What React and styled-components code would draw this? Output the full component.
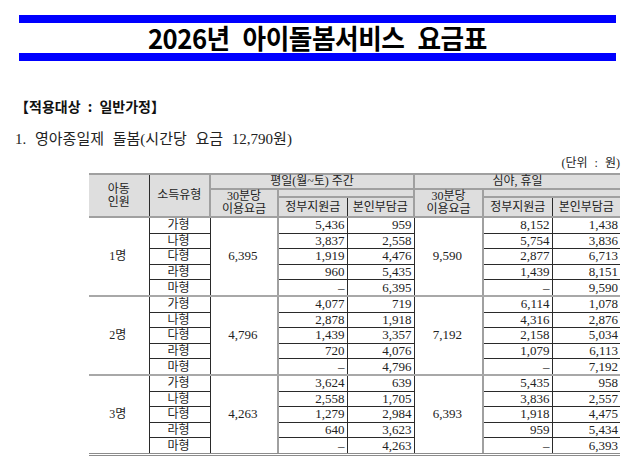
import React from "react"
import styled, { createGlobalStyle } from "styled-components"

const GlobalStyle = createGlobalStyle`
  body {
    margin: 0;
    background: #fff;
    color: #111;
    font-family: "Liberation Serif", "Noto Sans CJK KR", serif;
  }
`

const groups = [
  {
    label: "1명",
    day: "6,395",
    night: "9,590",
    rows: [
      ["가형", "5,436", "959", "8,152", "1,438"],
      ["나형", "3,837", "2,558", "5,754", "3,836"],
      ["다형", "1,919", "4,476", "2,877", "6,713"],
      ["라형", "960", "5,435", "1,439", "8,151"],
      ["마형", "–", "6,395", "–", "9,590"],
    ],
  },
  {
    label: "2명",
    day: "4,796",
    night: "7,192",
    rows: [
      ["가형", "4,077", "719", "6,114", "1,078"],
      ["나형", "2,878", "1,918", "4,316", "2,876"],
      ["다형", "1,439", "3,357", "2,158", "5,034"],
      ["라형", "720", "4,076", "1,079", "6,113"],
      ["마형", "–", "4,796", "–", "7,192"],
    ],
  },
  {
    label: "3명",
    day: "4,263",
    night: "6,393",
    rows: [
      ["가형", "3,624", "639", "5,435", "958"],
      ["나형", "2,558", "1,705", "3,836", "2,557"],
      ["다형", "1,279", "2,984", "1,918", "4,475"],
      ["라형", "640", "3,623", "959", "5,434"],
      ["마형", "–", "4,263", "–", "6,393"],
    ],
  },
]

const borders = {
  thin: "1px solid #2a2a2a",
  gray: "2px solid #a0a0a0",
  group: "2px solid #a8a8a8",
  bottom: "3px double #8c8c8c",
}

const Page = styled.div`
  width: 641px;
  padding-top: 15px;
`

const TitleBar = styled.div`
  margin: 0 25px 0 19px;
  height: 30px;
  border-top: 8px solid #0000ff;
  border-bottom: 8px solid #0000ff;
  display: flex;
  align-items: center;
  justify-content: center;
`

const Title = styled.h1`
  margin: 0;
  font-family: "Noto Sans CJK KR", sans-serif;
  font-weight: 700;
  font-size: 27px;
  line-height: 30px;
  letter-spacing: -0.5px;
  word-spacing: 8px;
  color: #000;
  transform: scaleX(0.95);
`

const Heading = styled.div`
  margin: 35px 0 0 15px;
  font-family: "Noto Sans CJK KR", sans-serif;
  font-weight: 700;
  font-size: 14px;
  line-height: 20px;
  word-spacing: 4px;
`

const SubTitle = styled.div`
  margin: 13px 0 0 15px;
  font-size: 15px;
  line-height: 20px;
  word-spacing: 5px;
  color: #222;
`

const Unit = styled.div`
  margin-top: 7px;
  padding-right: 21px;
  text-align: right;
  font-size: 12px;
  line-height: 14px;
  word-spacing: 4px;
  color: #222;
`

const Table = styled.table`
  margin: 3px 0 0 89px;
  width: 531px;
  table-layout: fixed;
  border-collapse: collapse;
  border-top: 2px solid #a0a0a0;
  border-bottom: ${borders.bottom};
  font-size: 13px;
`

const Th = styled.th`
  background: #dedede;
  font-weight: 400;
  font-size: 12px;
  line-height: 13px;
  padding: 0;
  text-align: center;
  color: #222;
  border-right: ${({ $r }) => (borders[$r] ? borders[$r] : "none")};
  border-bottom: ${({ $b }) => (borders[$b] ? borders[$b] : "none")};
`

const Td = styled.td`
  padding: 0 2px 0 0;
  height: 14.6px;
  line-height: 14px;
  text-align: ${({ $align }) => $align || "right"};
  font-size: ${({ $ko }) => ($ko ? "12px" : "13px")};
  color: #222;
  white-space: nowrap;
  border-right: ${({ $r }) => (borders[$r] ? borders[$r] : "none")};
  border-bottom: ${({ $b }) => (borders[$b] ? borders[$b] : "none")};
`

const HeadRow = styled.tr`
  height: ${({ $h }) => $h}px;
`

function Group({ group, last }) {
  return group.rows.map((row, i) => {
    const end = i === group.rows.length - 1
    const b = end ? (last ? null : "group") : "thin"
    return (
      <tr key={row[0]}>
        {i === 0 && (
          <Td rowSpan={5} $align="center" $ko $r="thin" $b={last ? null : "group"}>
            {group.label}
          </Td>
        )}
        <Td $align="center" $ko $r="thin" $b={b}>
          {row[0]}
        </Td>
        {i === 0 && (
          <Td rowSpan={5} $align="center" $r="gray" $b={last ? null : "group"}>
            {group.day}
          </Td>
        )}
        <Td $r="thin" $b={b}>
          {row[1]}
        </Td>
        <Td $r="thin" $b={b}>
          {row[2]}
        </Td>
        {i === 0 && (
          <Td rowSpan={5} $align="center" $r="gray" $b={last ? null : "group"}>
            {group.night}
          </Td>
        )}
        <Td $r="thin" $b={b}>
          {row[3]}
        </Td>
        <Td $b={b}>{row[4]}</Td>
      </tr>
    )
  })
}

export default function App() {
  return (
    <Page>
      <GlobalStyle />
      <TitleBar>
        <Title>2026년 아이돌봄서비스 요금표</Title>
      </TitleBar>
      <Heading>【적용대상 : 일반가정】</Heading>
      <SubTitle>1. 영아종일제 돌봄(시간당 요금 12,790원)</SubTitle>
      <Unit>(단위 : 원)</Unit>
      <Table>
        <colgroup>
          <col style={{ width: 60 }} />
          <col style={{ width: 61 }} />
          <col style={{ width: 68 }} />
          <col style={{ width: 69 }} />
          <col style={{ width: 67 }} />
          <col style={{ width: 69 }} />
          <col style={{ width: 69 }} />
          <col style={{ width: 68 }} />
        </colgroup>
        <thead>
          <HeadRow $h={13}>
            <Th rowSpan={3} $r="thin" $b="gray">
              아동
              <br />
              인원
            </Th>
            <Th rowSpan={3} $r="gray" $b="gray">
              소득유형
            </Th>
            <Th colSpan={3} $r="gray" $b="gray">
              평일(월~토) 주간
            </Th>
            <Th colSpan={3} $b="gray">
              심야, 휴일
            </Th>
          </HeadRow>
          <HeadRow $h={8}>
            <Th rowSpan={2} $r="gray" $b="gray">
              30분당
              <br />
              이용요금
            </Th>
            <Th colSpan={2} $r="gray" $b="gray" />
            <Th rowSpan={2} $r="gray" $b="gray">
              30분당
              <br />
              이용요금
            </Th>
            <Th colSpan={2} $b="gray" />
          </HeadRow>
          <HeadRow $h={19}>
            <Th $r="thin" $b="gray">
              정부지원금
            </Th>
            <Th $r="gray" $b="gray">
              본인부담금
            </Th>
            <Th $r="thin" $b="gray">
              정부지원금
            </Th>
            <Th $b="gray">본인부담금</Th>
          </HeadRow>
        </thead>
        <tbody>
          {groups.map((g, i) => (
            <Group key={g.label} group={g} last={i === groups.length - 1} />
          ))}
        </tbody>
      </Table>
    </Page>
  )
}
